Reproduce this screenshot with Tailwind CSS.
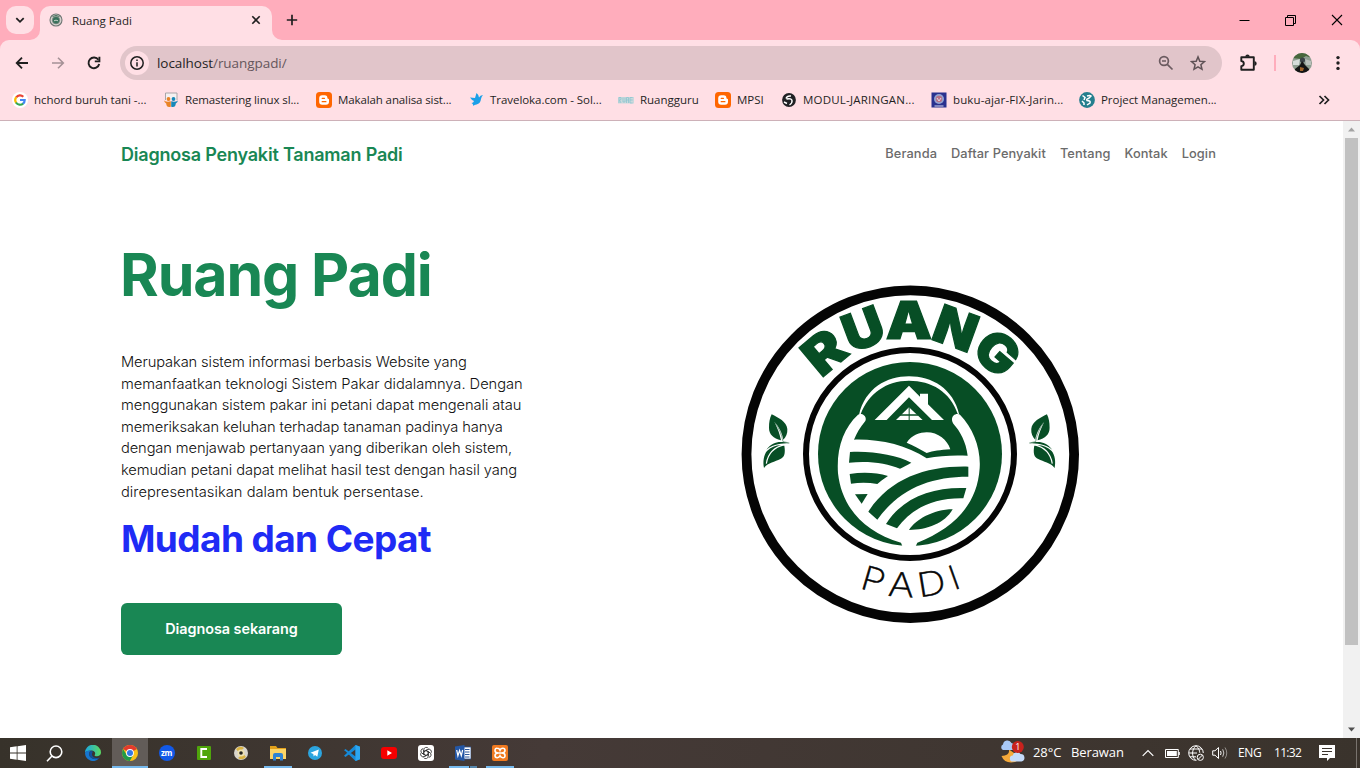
<!DOCTYPE html>
<html lang="id">
<head>
<meta charset="utf-8">
<title>Ruang Padi</title>
<script src="https://cdn.jsdelivr.net/npm/@tailwindcss/browser@4"></script>
</head>
<body class="flex h-[768px] w-[1360px] flex-col overflow-hidden bg-white font-['Open_Sans',sans-serif] text-[#1f1f1f]">

<!-- Tab strip -->
<div class="flex h-10 shrink-0 bg-[#ffadbc]">
  <div class="ml-1.5 mt-1.5 flex size-7 items-center justify-center rounded-[10px] bg-[#ffdfe5]">
    <svg class="size-3" viewBox="0 0 12 12" fill="none" stroke="#1f1f1f" stroke-width="1.8"><path d="M2.3 4.2 6 7.8l3.7-3.6"/></svg>
  </div>
  <div class="relative ml-1.5 mt-1.5 flex h-[34px] w-[232px] items-center rounded-t-[10px] bg-[#ffdfe5]">
    <svg class="absolute -left-2.5 bottom-0 size-2.5" viewBox="0 0 10 10"><path d="M10 0v10H0A10 10 0 0 0 10 0Z" fill="#ffdfe5"/></svg>
    <svg class="absolute -right-2.5 bottom-0 size-2.5" viewBox="0 0 10 10"><path d="M0 0v10h10A10 10 0 0 1 0 0Z" fill="#ffdfe5"/></svg>
    <svg class="-mt-1.5 ml-[9px] size-[14px]" viewBox="0 0 14 14"><circle cx="7" cy="7" r="6" fill="#d8d3d0" stroke="#6f7774" stroke-width="1.1"/><circle cx="7" cy="7.2" r="3.7" fill="#37715a" stroke="#858b86" stroke-width=".7"/><path d="M3.5 3.6Q7 1.2 10.5 3.6" fill="none" stroke="#4c7862"/><path d="M5 7.8q2-1.3 4 0" fill="none" stroke="#c6d2c9"/></svg>
    <span class="-mt-[5px] ml-[9px] text-[11.5px] tracking-[-0.03px]">Ruang Padi</span>
    <svg class="-mt-1.5 ml-auto mr-[11px] size-2.5" viewBox="0 0 10 10" stroke="#1f1f1f" stroke-width="1.6"><path d="m1.3 1.3 7.4 7.4m0-7.4L1.3 8.7"/></svg>
  </div>
  <svg class="ml-[14px] mt-[14px] size-3" viewBox="0 0 12 12" stroke="#1f1f1f" stroke-width="1.7"><path d="M6 .8v10.4M.8 6h10.4"/></svg>
  <div class="ml-auto mr-[17px] flex items-center gap-[35px]">
    <svg class="size-[11px]" viewBox="0 0 11 11" stroke="#000"><path d="M.5 5.5h10"/></svg>
    <svg class="size-[11px]" viewBox="0 0 11 11" fill="none" stroke="#000"><path d="M.5 2.5h8v8h-8zM2.5 2.5v-2h8v8h-2"/></svg>
    <svg class="size-3" viewBox="0 0 12 12" stroke="#000" stroke-width="1.1"><path d="m1 1 10 10M11 1 1 11"/></svg>
  </div>
</div>

<!-- Toolbar and bookmarks -->
<div class="shrink-0 bg-[#ffadbc]">
<div class="h-[81px] rounded-t-[9px] border-b border-[#cdb1b8] bg-[#ffdfe5]">
  <div class="flex h-[46px] items-center pl-[15px] *:shrink-0">
    <svg class="size-[14px]" viewBox="0 0 14 14" fill="none" stroke="#1f1f1f" stroke-width="1.8"><path d="M13 7H2M7 1.7 1.7 7 7 12.3"/></svg>
    <svg class="ml-[22px] size-[14px]" viewBox="0 0 14 14" fill="none" stroke="#a59196" stroke-width="1.6"><path d="M1 7h11M7 1.7 12.3 7 7 12.3"/></svg>
    <svg class="ml-[22px] size-[14px]" viewBox="0 0 14 14" fill="none" stroke="#1f1f1f" stroke-width="1.9"><path d="M12.2 8A5.4 5.4 0 1 1 11.4 3.8"/><path d="M12.4.8v4.6H7.8"/></svg>
    <div class="ml-[19px] flex h-[34px] w-[1102px] items-center rounded-full bg-[#e1c5ca] pl-[5px] pr-4">
      <div class="flex size-6 items-center justify-center rounded-full bg-[#ffdfe5]">
        <svg class="size-4" viewBox="0 0 16 16" fill="none" stroke="#1f1f1f" stroke-width="1.5"><circle cx="8" cy="8" r="6.2"/><path d="M8 7.2v4.2M8 4.5v1.6"/></svg>
      </div>
      <span class="ml-2 text-[13.5px] tracking-[-0.06px]">localhost<span class="text-[#66575c]">/ruangpadi/</span></span>
      <svg class="ml-auto size-4" viewBox="0 0 16 16" fill="none" stroke="#6b5b60" stroke-width="1.7"><circle cx="6" cy="6" r="4.4"/><path d="m9.300 9.300 5.200 5.200M4 6h4"/></svg>
      <svg class="ml-4 size-4" viewBox="0 0 16 16" fill="none" stroke="#5f5256" stroke-width="1.5"><path d="m8 1.900 1.800 4.300 4.700.4-3.600 3.100 1.100 4.600-4-2.400-4 2.400 1.100-4.600-3.600-3.100 4.700-.4z"/></svg>
    </div>
    <svg class="ml-[17px] size-[18px]" viewBox="0 0 18 18"><path d="M2.300 3.300h12.500v12.500H2.300v-3.700a2.100 2.100 0 0 0 0-5z" fill="none" stroke="#1f1f1f" stroke-width="1.900" stroke-linejoin="round"/><path d="M6.300 2.700a2.200 2.200 0 0 1 4.400 0ZM15.500 7.300a2.200 2.200 0 0 1 0 4.400Z" fill="#1f1f1f"/></svg>
    <div class="ml-[17px] h-4 w-0.5 bg-[#ffadbc]"></div>
    <svg class="ml-4 size-5" viewBox="0 0 20 20"><clipPath id="av"><circle cx="10" cy="10" r="10"/></clipPath><g clip-path="url(#av)"><path fill="#8d9d90" d="M0 0h20v20H0z"/><path fill="#47663c" d="M0 0h20v5l-6-2-5 3-9-1z"/><path fill="#d6dcda" d="M1 8 8 6l-1 6H1z"/><path fill="#b9c0ba" d="m13 6 6 2v4h-5z"/><circle cx="10.500" cy="7" r="2.600" fill="#3b4448"/><path fill="#141414" d="M3 20v-4l5-4 2-4 3 4 4 4v4z"/><path fill="#a0642a" d="m8 14 4 1-1 3H8z"/></g></svg>
    <svg class="ml-[18px] size-4" viewBox="0 0 16 16" fill="#1f1f1f"><circle cx="8" cy="2.600" r="1.700"/><circle cx="8" cy="8" r="1.700"/><circle cx="8" cy="13.400" r="1.700"/></svg>
  </div>
  <div class="flex h-7 items-center text-[11.5px]">
    <div class="flex w-[151px] items-center gap-1.5 pl-3">
      <svg class="size-4" viewBox="0 0 16 16"><circle cx="8" cy="8" r="8" fill="#fff"/><g fill="none" stroke-width="2.200"><path d="M4.200 5.300A4.700 4.700 0 0 1 11.300 4.800" stroke="#ea4335"/><path d="M4.200 5.200a4.700 4.700 0 0 0 0 5.600" stroke="#fbbc05"/><path d="M4 10.500a4.700 4.700 0 0 0 7.200 1" stroke="#34a853"/><path d="M11 11.700A4.700 4.700 0 0 0 12.700 8H8" stroke="#4285f4"/></g></svg>
      <span class="whitespace-nowrap tracking-[-0.04px]">hchord buruh tani -...</span>
    </div>
    <div class="flex w-[153px] items-center gap-1.5 pl-3">
      <svg class="size-4" viewBox="0 0 16 16"><path d="M2.500 8V1h11.500v7" fill="#f6f1f1" stroke="#a9a5a8" stroke-width="1"/><circle cx="5.500" cy="7" r="1.900" fill="#e98325"/><circle cx="10.500" cy="7" r="1.900" fill="#1689b9"/><path d="M1 8.500q3 2 6.800.8v5.500q-4.300 1.200-4.600-3.300Q1.500 10.500 1 8.500Z" fill="#e98325"/><path d="M15 8.500q-3 2-6.800.8v5.500q4.300 1.200 4.600-3.300 1.700-1 2.200-3Z" fill="#1689b9"/></svg>
      <span class="whitespace-nowrap tracking-[-0.12px]">Remastering linux sl...</span>
    </div>
    <div class="flex w-[153px] items-center gap-1.5 pl-3">
      <svg class="size-4" viewBox="0 0 16 16"><rect width="16" height="16" rx="3.500" fill="#ff6600"/><path d="M6.200 3.300h2.500a2.700 2.700 0 0 1 2.700 2.900c0 .7 1.600.3 1.600 1.200v2.300a3 3 0 0 1-3 3H6.200a3 3 0 0 1-3-3V6.300a3 3 0 0 1 3-3Z" fill="#fff"/><path d="M6.200 6.300h2.300M6.200 9.700h3.700" stroke="#ff6600" stroke-width="1.300" stroke-linecap="round"/></svg>
      <span class="whitespace-nowrap tracking-[-0.11px]">Makalah analisa sist...</span>
    </div>
    <div class="flex w-[149px] items-center gap-[5px] pl-3">
      <svg class="size-4" viewBox="0 0 16 16"><path d="M1 5.500 6 6 7.500 1q2.500 2 2.500 4.500Q11 3 14 3q-1.500 1.500-2 4-.5 4.500-4.500 5.500-2.500.3-3 1.500-.5-2.500-2-3 2-.2 2.500-2Q2.500 8 1 5.500Z" fill="#1ba0e8"/></svg>
      <span class="whitespace-nowrap tracking-[-0.05px]">Traveloka.com - Sol...</span>
    </div>
    <div class="flex w-[97px] items-center gap-1.5 pl-3">
      <svg class="size-4" viewBox="0 0 16 16"><path d="M0 5h16v6.500H0z" fill="#cbd9dd"/><path d="M1 11V5.500h2v2L1.500 8 3 11M5 5.500V10h2V5.500M8.500 11V5.500h2V11M8.500 8h2M12 11V5.500h2.700M12 8h2.700M12 11h2.700" fill="none" stroke="#8ac5cf" stroke-width=".8"/></svg>
      <span class="tracking-[-0.02px]">Ruangguru</span>
    </div>
    <div class="flex w-[66px] items-center gap-1.5 pl-3">
      <svg class="size-4" viewBox="0 0 16 16"><rect width="16" height="16" rx="3.500" fill="#ff6600"/><path d="M6.200 3.300h2.500a2.700 2.700 0 0 1 2.700 2.900c0 .7 1.600.3 1.600 1.200v2.300a3 3 0 0 1-3 3H6.200a3 3 0 0 1-3-3V6.300a3 3 0 0 1 3-3Z" fill="#fff"/><path d="M6.200 6.300h2.300M6.200 9.700h3.700" stroke="#ff6600" stroke-width="1.300" stroke-linecap="round"/></svg>
      <span>MPSI</span>
    </div>
    <div class="flex w-[150px] items-center gap-1.5 pl-3">
      <svg class="size-4" viewBox="0 0 16 16"><circle cx="8" cy="8" r="6.900" fill="#202124"/><path d="M5 6.500Q6 3.500 10 4M5.500 7q5-1 5.500 1.500T8.500 13M3 10l3 1.500" fill="none" stroke="#fff" stroke-width="1.400"/></svg>
      <span class="whitespace-nowrap tracking-[0.2px]">MODUL-JARINGAN...</span>
    </div>
    <div class="flex w-[148px] items-center gap-1.5 pl-3">
      <svg class="size-4" viewBox="0 0 16 16"><rect x=".5" y=".5" width="15" height="15" fill="#29328f"/><circle cx="8" cy="7" r="5" fill="#93a3cf"/><circle cx="8" cy="7" r="3.200" fill="#b87186"/><path d="m6 6 2 3 2-3M3.500 14h9" stroke="#d9dcf0" fill="none"/></svg>
      <span class="whitespace-nowrap tracking-[0.13px]">buku-ajar-FIX-Jarin...</span>
    </div>
    <div class="flex items-center gap-1.5 pl-3">
      <svg class="size-4" viewBox="0 0 16 16"><circle cx="8" cy="8" r="7.900" fill="#257f8e"/><path d="M3.500 3.500 6 5.500 5 8M8 4q3-1 4 0L9.500 6.500Q7 7 8 8.500q4 0 3 2.500L8 13M3 9l2 2v2" fill="none" stroke="#fff" stroke-width="1.500"/></svg>
      <span class="whitespace-nowrap tracking-[-0.05px]">Project Managemen...</span>
    </div>
    <svg class="ml-auto mr-[30px] size-3" viewBox="0 0 12 12" fill="none" stroke="#1f1f1f" stroke-width="1.700"><path d="m1.500 2 4 4-4 4m5-8 4 4-4 4"/></svg>
  </div>
</div>
</div>

<!-- Page -->
<div class="flex h-[617px] shrink-0 bg-white">
  <main class="flex w-[1343px] flex-col pl-[121px] pr-[127px] font-['Inter',sans-serif]">
    <nav class="mt-5 flex h-[26px] items-center justify-between">
      <span class="text-[18px] font-semibold tracking-[-0.2px] text-[#198754]">Diagnosa Penyakit Tanaman Padi</span>
      <div class="flex gap-[14px] text-[12.800px] font-medium tracking-[0.1px] text-[#6b6b6b]">
        <span>Beranda</span><span>Daftar Penyakit</span><span>Tentang</span><span>Kontak</span><span>Login</span>
      </div>
    </nav>
    <div class="flex">
      <section class="w-[609px] pt-[72px]">
        <h1 class="-ml-px text-[59px] font-bold leading-[72px] tracking-[-1.1px] text-[#198754]">Ruang Padi</h1>
        <p class="mt-[41px] flex flex-col whitespace-nowrap text-[14.700px] font-light leading-[21.600px] text-[#111]">
          <span class="tracking-[-0.12px]">Merupakan sistem informasi berbasis Website yang</span>
          <span class="tracking-[-0.03px]">memanfaatkan teknologi Sistem Pakar didalamnya. Dengan</span>
          <span class="tracking-[-0.08px]">menggunakan sistem pakar ini petani dapat mengenali atau</span>
          <span class="tracking-[-0.12px]">memeriksakan keluhan terhadap tanaman padinya hanya</span>
          <span class="tracking-[-0.12px]">dengan menjawab pertanyaan yang diberikan oleh sistem,</span>
          <span class="tracking-[-0.09px]">kemudian petani dapat melihat hasil test dengan hasil yang</span>
          <span class="tracking-[0.03px]">direpresentasikan dalam bentuk persentase.</span>
        </p>
        <h2 class="mt-3 text-[37px] font-bold leading-[48px] tracking-[-0.6px] text-[#1f2bf5]">Mudah dan Cepat</h2>
        <button class="mt-10 h-[52px] w-[221px] rounded-md bg-[#198754] text-[14.400px] font-semibold tracking-[-0.05px] text-white">Diagnosa sekarang</button>
      </section>
      <svg class="mt-[108px] size-[360px] shrink-0" viewBox="730 275 360 360">
        <circle cx="910.300" cy="454.200" r="163.800" fill="none" stroke="#050505" stroke-width="9.800"/>
        <circle cx="910" cy="454" r="104" fill="none" stroke="#050505" stroke-width="6"/>
        <circle cx="910" cy="454" r="92" fill="#074e25"/>
        <!-- Ring lettering -->
        <g class="font-['Inter',sans-serif] text-[52px] font-black" fill="#074e25" stroke="#074e25" stroke-width="1.200" text-anchor="middle">
          <text transform="rotate(-40 910 454) translate(910 339) scale(1.120 1)">R</text>
          <text transform="rotate(-20.500 910 454) translate(910 339) scale(1.080 1)">U</text>
          <text transform="translate(909 339) scale(1.120 1)">A</text>
          <text transform="rotate(20 910 454) translate(910 339) scale(1.060 1)">N</text>
          <text transform="rotate(40.800 910 454) translate(910 339) scale(1.060 1)">G</text>
        </g>
        <g class="font-['Inter',sans-serif] text-[33.500px] font-extralight" fill="#050505" stroke="#050505" stroke-width=".500" text-anchor="middle">
          <text transform="rotate(16.200 910 454) translate(910 597) scale(1.120 1)">P</text>
          <text transform="rotate(3.800 910 454) translate(910 597) scale(1.180 1)">A</text>
          <text transform="rotate(-9.300 910 454) translate(910 597) scale(1.180 1)">D</text>
          <text transform="rotate(-19.600 910 454) translate(910 597)">I</text>
        </g>
        <!-- Leaves -->
        <defs><g id="leaf">
          <path d="M50 28C70 38 95 50 97 72C98 86 93 96 85 104C82 85 72 65 58 50C68 70 75 88 78 106C55 100 42 88 42 68C42 52 44 40 50 28Z" fill="#074e25"/>
          <path d="M58 50C72 70 80 88 84 110L103 114" fill="none" stroke="#074e25" stroke-width="1.500"/>
          <path d="M88 122C92 145 88 157 76 162C60 171 40 172 27 189C23 170 26 150 36 138C50 124 70 118 88 122Z" fill="#074e25"/>
          <path d="M34 176C38 150 52 128 88 119" fill="none" stroke="#fff" stroke-width="3.500"/>
          <path d="M34 134C55 108 75 108 103 115C80 116 58 116 34 134Z" fill="#074e25"/>
        </g></defs>
        <use href="#leaf" transform="translate(755 405) scale(.3333)"/>
        <use href="#leaf" transform="translate(1063.600 405) scale(-.3333 .3333)"/>
        <!-- Rice field emblem -->
        <g transform="translate(800 345) scale(.33333)" fill="#fff">
          <path d="M177 210C195 130 260 94 327 94C395 94 460 130 478 210L473 206C450 140 395 107 327 107C260 107 205 145 182 208Z"/>
          <path d="M174 209C186 203 202 214 196 228C180 248 170 264 162 284C240 282 318 300 380 340C420 332 460 330 503 332C498 290 480 258 460 236C448 217 465 202 480 209C520 250 543 310 539 370C532 480 460 550 352 593L346 606H308L303 593C190 560 125 485 114 385C109 310 130 250 174 209Z"/>
          <path d="M320 293C335 270 360 262 380 262C415 262 442 285 451 313C420 315 400 318 380 324C360 312 340 302 320 293Z"/>
          <path d="M224 225 327 122 360 155V146H384V178L432 225H396L327 157 260 225Z"/>
          <path d="M288 225 327 187 368 225Z"/>
          <g fill="#074e25">
            <path d="M326 187h3v38h-3zM300 208h54v4h-54z"/>
            <path d="M150 321C215 317 290 330 334 353C322 360 310 366 300 371C260 355 210 347 147 353Z"/>
            <path d="M149 387C190 381 230 383 264 393C250 402 240 410 232 417C205 412 180 412 153 416Z"/>
            <path d="M165 448 203 447 185 476Z"/>
            <path d="M505 365V395C390 395 300 430 232 524L205 500C270 400 380 362 505 365Z"/>
            <path d="M499 429 490 460C400 458 335 490 291 550L258 537C310 455 400 425 499 429Z"/>
            <path d="M458 493C400 493 345 525 327 555C380 555 435 535 458 493Z"/>
          </g>
        </g>
      </svg>
    </div>
  </main>
  <div class="flex w-[17px] flex-col items-center justify-between bg-[#f1f1f1]">
    <svg class="h-[17px] w-[17px]" viewBox="0 0 17 17"><path d="m5 10.500 3.500-4 3.500 4z" fill="#a3a3a3"/></svg>
    <div class="mb-auto h-[507px] w-[13px] bg-[#c1c1c1]"></div>
    <svg class="h-[17px] w-[17px]" viewBox="0 0 17 17"><path d="m5 6.500 3.500 4 3.500-4z" fill="#505050"/></svg>
  </div>
</div>

<!-- Taskbar -->
<footer class="flex h-[30px] shrink-0 items-stretch bg-linear-to-r from-[#37322a] via-[#453a37] via-40% to-[#3a332c] text-white">
  <div class="flex w-9 items-center justify-center"><svg class="size-4" viewBox="0 0 16 16" fill="#fff"><path d="M0 2.300 6.700 1.300V7.600H0zM7.500 1.200 16 0v7.600H7.500zM0 8.400h6.700v6.300L0 13.700zM7.500 8.400H16V16l-8.500-1.200z"/></svg></div>
  <div class="flex w-9 items-center justify-center"><svg class="size-[17px]" viewBox="0 0 17 17" fill="none" stroke="#fff" stroke-width="1.600"><circle cx="10" cy="6.800" r="5.800"/><path d="M6 11 1 16.200"/></svg></div>
  <div class="flex w-10 items-center justify-center pl-0.5"><svg class="size-4" viewBox="0 0 16 16"><defs><linearGradient id="e1" x2="1"><stop stop-color="#1aa7e3"/><stop offset="1" stop-color="#5cdb62"/></linearGradient></defs><path d="M0 8a8 8 0 0 1 16-.5c0 2.500-2 3.800-4.200 3.800-1.800 0-2.600-.8-2-1.600C10.900 8 9.500 5.600 6.500 5.600 3 5.600.5 7 0 8Z" fill="url(#e1)"/><path d="M0 8c.8-2 3.500-3 6-2.200-1.500.7-2 2.200-1.800 4C4.600 13 8 14.800 13.500 13.800A8 8 0 0 1 0 8Z" fill="#1676cf"/><path d="M5.500 6C3.500 8 4 11.500 7 13.300q3.500 1.700 6.500.5.800-.6 1-1.300c-4 1.500-7.500-.3-7.500-3.200 0-1 .5-2 1-2.500Q7 5.800 5.500 6Z" fill="#124f9c"/></svg></div>
  <div class="flex w-9 items-center justify-center border-b-2 border-[#76b9ed] bg-[#625c58] pt-0.5"><svg class="size-4" viewBox="0 0 16 16"><circle cx="8" cy="8" r="8" fill="#fbc116"/><path d="M8 8 1.100 4a8 8 0 0 1 13.800 0Z" fill="#e33b2e"/><path d="M1.100 4 5 10.500 8 11.500 8 16A8 8 0 0 1 1.100 4Z" fill="#229a48"/><path d="M8 11.500 7.800 16 11.500 9.500Z" fill="#229a48"/><circle cx="8" cy="8" r="3.900" fill="#fff"/><circle cx="8" cy="8" r="3" fill="#3478e5"/></svg></div>
  <div class="flex w-[37px] items-center justify-center"><span class="flex size-4 items-center justify-center rounded-full bg-[#1259e8] pb-px text-[8px] font-bold tracking-[-0.3px]">zm</span></div>
  <div class="flex w-[37px] items-center justify-center"><svg class="size-[14px]" viewBox="0 0 14 14"><rect width="14" height="14" rx="1" fill="#4fa50b"/><path d="M10 3H4.300v8H10" fill="none" stroke="#fff" stroke-width="1.900"/></svg></div>
  <div class="flex w-[37px] items-center justify-center"><svg class="size-[14px]" viewBox="0 0 14 14"><circle cx="7" cy="7" r="7" fill="#d8d5cc"/><path d="M2 3q4-4 8-1L5 6.500zM12 11q-4 4-8 1l5-4.500z" fill="#d9b343"/><circle cx="7" cy="7" r="3.500" fill="#eee2b2"/><circle cx="7" cy="7" r="1.800" fill="#24231f"/></svg></div>
  <div class="flex w-[37px] items-center justify-center"><div class="flex h-full w-7 items-center justify-center border-b-2 border-[#76b9ed] pt-0.5"><svg class="size-4" viewBox="0 0 16 16"><path d="M0 1h6l1.500 2H16v11H0z" fill="#e1a01a"/><path d="M0 4h16v10H0z" fill="#fbd466"/><path d="M3 15.500V10q0-2 2-2h6q2 0 2 2v5.500h-3V12H6v3.500z" fill="#2e83d4"/></svg></div></div>
  <div class="flex w-[37px] items-center justify-center"><svg class="size-[14px]" viewBox="0 0 14 14"><circle cx="7" cy="7" r="7" fill="#2ca5df"/><path d="m2.500 6.800 8.300-3.300-1.500 7.300-2.300-1.700-1.300 1.300-.4-2.500z" fill="#fff"/></svg></div>
  <div class="flex w-[37px] items-center justify-center"><svg class="size-4" viewBox="0 0 16 16"><path d="M11.500 0 16 1.800v12.400L11.500 16l-10-9.700L0 5.200 1.500 4 11.500 11.500v-7L1.500 12 0 10.800z" fill="#168ad8"/><path d="M11.500 0 16 1.800v12.400L11.500 16z" fill="#2ba6f1"/></svg></div>
  <div class="flex w-[37px] items-center justify-center"><svg class="h-3 w-4" viewBox="0 0 16 12"><rect width="16" height="12" rx="3" fill="#f60000"/><path d="M6.300 3.300v5.400L11 6z" fill="#fff"/></svg></div>
  <div class="flex w-[37px] items-center justify-center"><svg class="size-4" viewBox="0 0 16 16"><rect width="16" height="16" rx="3" fill="#fff"/><g fill="none" stroke="#2a2a2a" stroke-width=".8"><path id="k" d="M5.800 9.200V4.800a2.500 2.500 0 0 1 4.600-1.300M5.800 6.700 9.500 4.600"/><use href="#k" transform="rotate(60 8 8)"/><use href="#k" transform="rotate(120 8 8)"/><use href="#k" transform="rotate(180 8 8)"/><use href="#k" transform="rotate(240 8 8)"/><use href="#k" transform="rotate(300 8 8)"/></g></svg></div>
  <div class="flex w-[37px] items-center justify-center"><div class="relative flex h-full w-7 items-center justify-center border-b-2 border-[#76b9ed] pt-0.5">
    <svg class="size-4" viewBox="0 0 16 16"><path d="M8 2h8v12H8z" fill="#fff" stroke="#2b579a" stroke-width=".8"/><path d="M10 4.500h4.500M10 7h4.500M10 9.500h4.500M10 12h4.500" stroke="#2b579a"/><path d="m0 1.500 9.500-1.500v16L0 14.500z" fill="#2457a5"/><path d="m1.700 5 1.200 5.800L4.600 5.500l1.700 5.300L7.600 5" fill="none" stroke="#fff" stroke-width="1.200"/></svg>
    <div class="absolute -bottom-0.5 right-0 h-0.5 w-2 border-l border-[#3f3936] bg-[#5686ab]"></div></div></div>
  <div class="flex w-[37px] items-center justify-center"><div class="flex h-full w-7 items-center justify-center border-b-2 border-[#76b9ed] pt-0.5"><svg class="size-4" viewBox="0 0 16 16"><rect width="16" height="16" rx="2" fill="#f17a20"/><path d="M6 8h4M6.200 8Q3 8 3 5.500T5.200 3.300Q7.200 3.300 8 5.200 8.800 3.300 10.800 3.300 13 3.300 13 5.500T9.800 8Q13 8 13 10.500T10.800 12.700Q8.800 12.700 8 10.800 7.200 12.700 5.200 12.700 3 12.700 3 10.500T6.200 8Z" fill="none" stroke="#fff" stroke-width="1.600"/></svg></div></div>

  <div class="ml-auto flex items-center">
    <svg class="-mt-0.5 h-6 w-[26px]" viewBox="0 0 26 24"><path d="M10 9.500q1 6-7.500 6.500 2.500 6.500 9.500 6.500T21 17Z" fill="#f5a93a"/><path d="M4 10a3 3 0 0 1 0-5.500 4.500 4.500 0 0 1 8.500-1.500Q16 4 16 10Z" fill="#a9c8f5"/><path d="M14 21.500a3 3 0 0 1-.3-6A4.300 4.300 0 0 1 21.500 14a3.800 3.800 0 0 1 1 7.500Z" fill="#c4dbfa"/><circle cx="18.800" cy="7" r="6" fill="#c8221d"/><text x="18.800" y="10.300" text-anchor="middle" fill="#fff" class="text-[9px]">1</text></svg>
    <span class="ml-2 w-[38px] whitespace-nowrap text-[13px] tracking-[-0.1px]">28°C</span>
    <span class="w-[71px] text-[13px] tracking-[-0.1px]">Berawan</span>
    <svg class="h-2 w-3" viewBox="0 0 12 8" fill="none" stroke="#fff" stroke-width="1.200"><path d="m.7 6.800 5.300-5.300 5.300 5.300"/></svg>
    <svg class="ml-[11px] h-[9px] w-[15px]" viewBox="0 0 15 9"><path d="M.5.500h12.800v8H.5z" fill="none" stroke="#fff"/><path d="M2 2h9.800v5H2zM13.500 3h1.300v3h-1.300z" fill="#fff"/></svg>
    <svg class="ml-2 size-4" viewBox="0 0 16 16" fill="none" stroke="#fff"><path d="M8.500 15.300A7.300 7.300 0 1 1 15.300 8M7.500 15.300C3.500 11 3.500 5 8 .7c3 2.800 3.700 5 3.700 7M.8 8H9M2 4h12M2 11.800h6"/><circle cx="12.300" cy="12.300" r="3.100"/><path d="m10 14.500 4.500-4.500"/></svg>
    <svg class="ml-2 h-[14px] w-[17px]" viewBox="0 0 17 14" fill="none" stroke="#fff"><path d="M.7 4.800H3l3.500-3.300v11L3 9.200H.7z"/><path d="M8.500 5q1.200 2 0 4"/><path d="M10.700 3.300q2.300 3.700 0 7.400" opacity=".75"/><path d="M13 1.500q3.500 5.500 0 11" opacity=".45"/></svg>
    <span class="ml-[9px] w-9 text-[12px] tracking-[-0.4px]">ENG</span>
    <span class="w-[45px] text-[12px] tracking-[-0.7px]">11:32</span>
    <svg class="h-4 w-4" viewBox="0 0 16 16"><path d="M0 0h16v13h-5l-3 3v-3H0z" fill="#fff"/><path d="M3 3.500h10M3 6.500h10M3 9.500h6" stroke="#3a332c"/></svg>
    <div class="ml-[21px] mr-[3px] h-[30px] w-px bg-[#79736e]"></div>
  </div>
</footer>
</body>
</html>
